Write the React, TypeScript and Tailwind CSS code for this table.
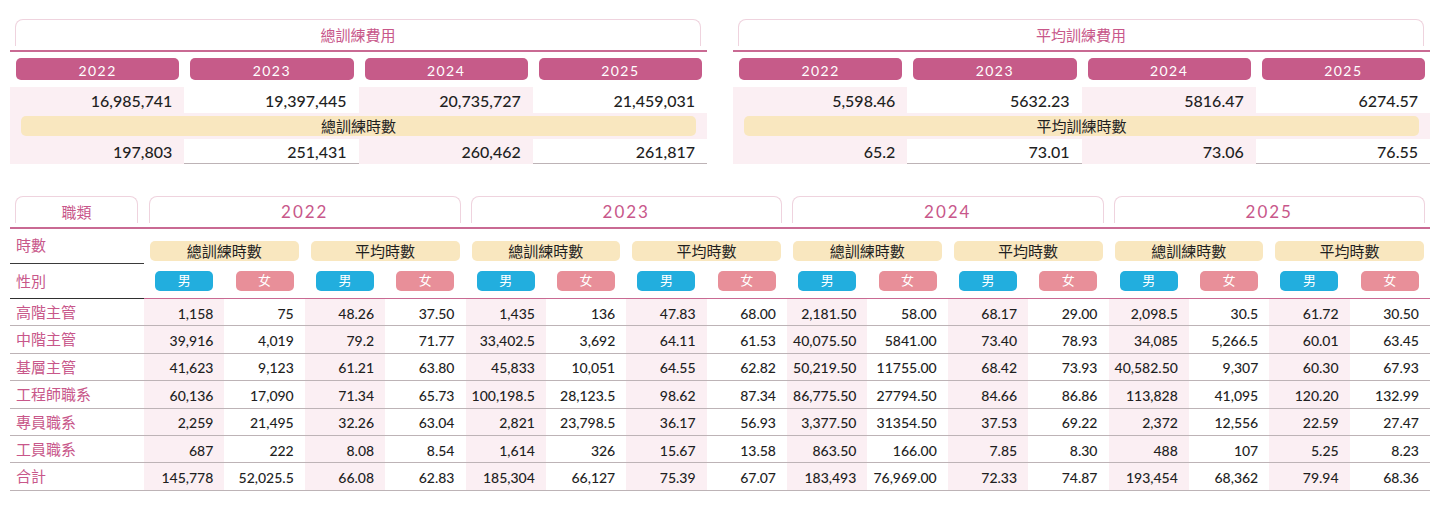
import React from "react";

const years = ["2022", "2023", "2024", "2025"];

const rows: { label: string; values: string[] }[] = [
  { label: "高階主管", values: ["1,158", "75", "48.26", "37.50", "1,435", "136", "47.83", "68.00", "2,181.50", "58.00", "68.17", "29.00", "2,098.5", "30.5", "61.72", "30.50"] },
  { label: "中階主管", values: ["39,916", "4,019", "79.2", "71.77", "33,402.5", "3,692", "64.11", "61.53", "40,075.50", "5841.00", "73.40", "78.93", "34,085", "5,266.5", "60.01", "63.45"] },
  { label: "基層主管", values: ["41,623", "9,123", "61.21", "63.80", "45,833", "10,051", "64.55", "62.82", "50,219.50", "11755.00", "68.42", "73.93", "40,582.50", "9,307", "60.30", "67.93"] },
  { label: "工程師職系", values: ["60,136", "17,090", "71.34", "65.73", "100,198.5", "28,123.5", "98.62", "87.34", "86,775.50", "27794.50", "84.66", "86.86", "113,828", "41,095", "120.20", "132.99"] },
  { label: "專員職系", values: ["2,259", "21,495", "32.26", "63.04", "2,821", "23,798.5", "36.17", "56.93", "3,377.50", "31354.50", "37.53", "69.22", "2,372", "12,556", "22.59", "27.47"] },
  { label: "工員職系", values: ["687", "222", "8.08", "8.54", "1,614", "326", "15.67", "13.58", "863.50", "166.00", "7.85", "8.30", "488", "107", "5.25", "8.23"] },
  { label: "合計", values: ["145,778", "52,025.5", "66.08", "62.83", "185,304", "66,127", "75.39", "67.07", "183,493", "76,969.00", "72.33", "74.87", "193,454", "68,362", "79.94", "68.36"] },
];

function TabHead({ children, className = "" }: { children: React.ReactNode; className?: string }) {
  return (
    <div
      className={`h-[27px] pt-[4px] rounded-t-[8px] border border-b-0 border-[#efd3de] flex items-center justify-center text-[15px] text-[#c8578a] ${className}`}
    >
      {children}
    </div>
  );
}

function SummaryPanel({ title, subtitle, top, bottom }: { title: string; subtitle: string; top: string[]; bottom: string[] }) {
  return (
    <div className="w-[697px]">
      <TabHead className="ml-[5px] mr-[6px]">{title}</TabHead>
      <div className="mt-[4px] h-[2px] bg-[#c96a93]" />
      <div className="grid grid-cols-4 pt-[6px] pb-[7px]">
        {years.map((y) => (
          <div key={y} className="pl-[6px] pr-[5px]">
            <div className="h-[22px] pt-[2px] rounded-[5px] bg-[#c65b89] text-white text-[14px] tracking-[1.5px] flex items-center justify-center">
              {y}
            </div>
          </div>
        ))}
      </div>
      <div className="grid grid-cols-4 h-[26px]">
        {top.map((v, i) => (
          <div key={i} className={`flex items-center justify-end pr-[12px] pt-[1px] text-[16px] font-medium text-[#1f1f1f] ${i % 2 === 0 ? "bg-[#fbeff3]" : ""}`}>
            {v}
          </div>
        ))}
      </div>
      <div className="h-[26px] bg-[#fbeff3] px-[11px] flex items-center">
        <div className="h-[20px] w-full rounded-[5px] bg-[#f9e7bf] flex items-center justify-center text-[15px] text-[#1f1f1f]">
          {subtitle}
        </div>
      </div>
      <div className="grid grid-cols-4 h-[25px] border-b border-[#bdb3b6]">
        {bottom.map((v, i) => (
          <div key={i} className={`flex items-center justify-end pr-[12px] pt-[1px] text-[16px] font-medium text-[#1f1f1f] ${i % 2 === 0 ? "bg-[#fbeff3]" : ""}`}>
            {v}
          </div>
        ))}
      </div>
    </div>
  );
}

export default function App() {
  return (
    <div className="h-[510px] w-[1440px] bg-white font-[Lato,'Noto_Sans_CJK_TC',sans-serif] px-[10px] pt-[19px]">
      {/* Summary panels */}
      <div className="flex justify-between">
        <SummaryPanel
          title="總訓練費用"
          subtitle="總訓練時數"
          top={["16,985,741", "19,397,445", "20,735,727", "21,459,031"]}
          bottom={["197,803", "251,431", "260,462", "261,817"]}
        />
        <SummaryPanel
          title="平均訓練費用"
          subtitle="平均訓練時數"
          top={["5,598.46", "5632.23", "5816.47", "6274.57"]}
          bottom={["65.2", "73.01", "73.06", "76.55"]}
        />
      </div>

      {/* Hours by job category */}
      <div className="mt-[32px] w-[1420px]">
        <div className="grid grid-cols-[134px_repeat(4,minmax(0,1fr))]">
          <TabHead className="ml-[5px] mr-[6px] h-[26px]">職類</TabHead>
          {years.map((y) => (
            <TabHead key={y} className="ml-[5px] mr-[5px] h-[26px] text-[17px] tracking-[2px]">
              {y}
            </TabHead>
          ))}
        </div>
        <div className="mt-[4px] h-[2px] bg-[#c96a93]" />

        <div className="grid grid-cols-[134px_repeat(8,minmax(0,1fr))] h-[35px]">
          <div className="flex items-center pl-[6px] pb-[2px] text-[15px] text-[#c8578a] border-b-[1.5px] border-[#3a3a3a]">時數</div>
          {years.flatMap((y) =>
            ["總訓練時數", "平均時數"].map((t) => (
              <div key={y + t} className="px-[6px] pt-[12px]">
                <div className="h-[20px] rounded-[5px] bg-[#f9e7bf] flex items-center justify-center text-[15px] text-[#1f1f1f]">{t}</div>
              </div>
            ))
          )}
        </div>

        <div className="grid grid-cols-[134px_repeat(16,minmax(0,1fr))] h-[35px]">
          <div className="flex items-center pl-[6px] text-[15px] text-[#c8578a] border-b-[1.5px] border-[#2f2f2f]">性別</div>
          {Array.from({ length: 16 }).map((_, i) => (
            <div key={i} className="flex items-center justify-center border-b-[1.5px] border-[#c96a93]">
              <div
                className={`w-[58px] h-[20px] rounded-[5px] flex items-center justify-center text-[13px] text-white ${i % 2 === 0 ? "bg-[#22aede]" : "bg-[#e88f99]"}`}
              >
                {i % 2 === 0 ? "男" : "女"}
              </div>
            </div>
          ))}
        </div>

        {rows.map((r) => (
          <div key={r.label} className="grid grid-cols-[134px_repeat(16,minmax(0,1fr))] h-[27.4px] border-b border-[#bdb3b6]">
            <div className="flex items-center pl-[6px] text-[15px] text-[#c8578a]">{r.label}</div>
            {r.values.map((v, i) => (
              <div
                key={i}
                className={`flex items-center justify-end pr-[11px] pt-[2px] text-[14px] font-medium text-[#1f1f1f] ${i % 2 === 0 ? "bg-[#fbeff3]" : ""}`}
              >
                {v}
              </div>
            ))}
          </div>
        ))}
      </div>
    </div>
  );
}
